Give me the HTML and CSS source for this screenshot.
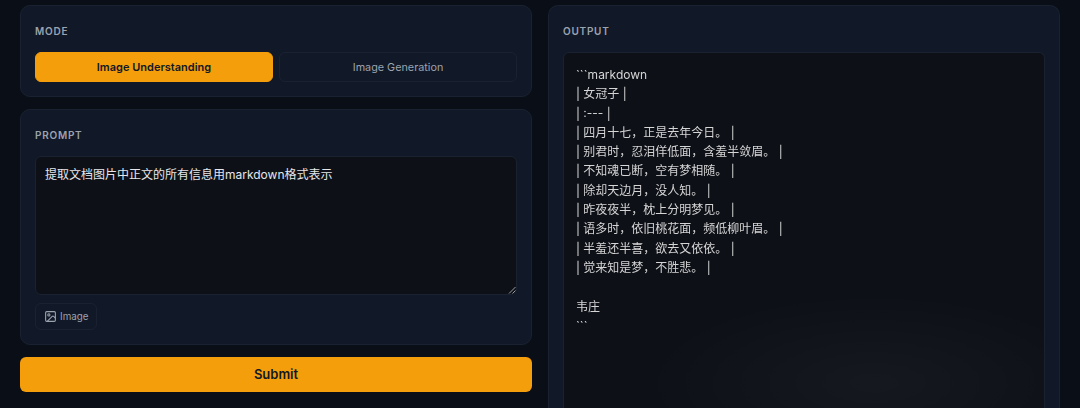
FILE: index.html
```html
<!DOCTYPE html>
<html lang="zh-CN">
<head>
<meta charset="utf-8">
<title>Image Understanding</title>
<link rel="stylesheet" href="styles.css">
</head>
<body>
<main class="layout">
  <div class="col">
    <section class="card mode-card">
      <h2 class="label">MODE</h2>
      <div class="tabs">
        <button class="tab active">Image Understanding</button>
        <button class="tab">Image Generation</button>
      </div>
    </section>
    <section class="card prompt-card">
      <h2 class="label">PROMPT</h2>
      <div class="prompt-box">提取文档图片中正文的所有信息用markdown格式表示
        <svg class="grip" width="8" height="8" viewBox="0 0 8 8"><path d="M7.5 1 1 7.5M7.5 4.5 4.5 7.5" stroke="#9a9da3" stroke-width="1" fill="none"/></svg>
      </div>
      <button class="attach">
        <svg width="13" height="13" viewBox="0 0 24 24" fill="none" stroke="currentColor" stroke-width="2" stroke-linecap="round" stroke-linejoin="round"><rect x="3" y="3" width="18" height="18" rx="2"/><circle cx="9" cy="9" r="2"/><path d="m21 15-3.1-3.1a2 2 0 0 0-2.8 0L6 21"/></svg>
        Image
      </button>
    </section>
    <button class="submit">Submit</button>
  </div>
  <section class="card output-card">
    <h2 class="label">OUTPUT</h2>
    <div class="output"><pre class="output-text">```markdown
| 女冠子 |
| :--- |
| 四月十七，正是去年今日。 |
| 别君时，忍泪佯低面，含羞半敛眉。 |
| 不知魂已断，空有梦相随。 |
| 除却天边月，没人知。 |
| 昨夜夜半，枕上分明梦见。 |
| 语多时，依旧桃花面，频低柳叶眉。 |
| 半羞还半喜，欲去又依依。 |
| 觉来知是梦，不胜悲。 |

韦庄
```</pre></div>
  </section>
</main>
</body>
</html>
```
FILE: styles.css
```css
* { box-sizing: border-box; }
html, body { margin: 0; height: 408px; overflow: hidden; }
body {
  background: #0a0e17;
  font-family: Inter, "Noto Sans CJK SC", sans-serif;
  color: #d1d5db;
}
.layout {
  display: grid;
  grid-template-columns: 512px 512px;
  gap: 16px;
  height: 403px;
  padding: 0 20px;
  margin-top: 5px;
}
.col { display: flex; flex-direction: column; gap: 12px; }
.card {
  background: #111827;
  border: 1px solid #1a2231;
  border-radius: 10px;
  padding: 19px 14px 14px;
}
.label {
  margin: 0 0 15px;
  font-size: 10px;
  line-height: 12px;
  font-weight: 600;
  letter-spacing: .75px;
  color: #9ca3af;
}
.mode-card { height: 92px; }
.tabs { display: grid; grid-template-columns: 1fr 1fr; gap: 6px; }
.tab {
  height: 30px;
  border: 1px solid #1a2231;
  border-radius: 6px;
  background: transparent;
  color: #9ca3af;
  font: 400 10.8px Inter, sans-serif;
  padding: 0;
}
.tab.active {
  background: #f59e0b;
  border-color: #f59e0b;
  color: #111827;
  font-size: 11px;
  font-weight: 600;
}
.prompt-card { height: 236px; }
.prompt-box {
  position: relative;
  height: 139px;
  background: #0d1017;
  border: 1px solid #1a2231;
  border-radius: 6px;
  padding: 8px 9px;
  font-size: 12px;
  line-height: 19.2px;
  color: #e5e7eb;
}
.grip { position: absolute; right: 0; bottom: 0; }
.attach {
  display: flex;
  align-items: center;
  gap: 3px;
  margin-top: 8px;
  height: 27px;
  padding: 0 8px 1px;
  background: transparent;
  border: 1px solid #1a2231;
  border-radius: 6px;
  color: #9ca3af;
  font: 400 9.8px Inter, sans-serif;
}
.submit {
  height: 35px;
  border: 0;
  border-radius: 6px;
  padding: 0 0 2px;
  background: #f59e0b;
  color: #111827;
  font: 600 13px Inter, sans-serif;
}
.output-card { height: 403px; overflow: hidden; border-bottom: 0; border-radius: 10px 10px 0 0; padding-bottom: 0; }
.output {
  position: relative;
  height: 356px;
  background: #0d1017;
  border: 1px solid #1a2231;
  border-bottom: 0;
  border-radius: 6px 6px 0 0;
  padding: 12px;
  overflow: hidden;
}
.output-text {
  margin: 0;
  font-family: Inter, "Noto Sans CJK SC", sans-serif;
  font-size: 12px;
  line-height: 19.3px;
  color: #d1d5db;
  filter: grayscale(1);
}
.output::after {
  content: "";
  position: absolute;
  right: -60px;
  top: 240px;
  width: 460px;
  height: 180px;
  background: radial-gradient(closest-side, rgba(255,255,255,.035), rgba(255,255,255,0));
  pointer-events: none;
}
```
